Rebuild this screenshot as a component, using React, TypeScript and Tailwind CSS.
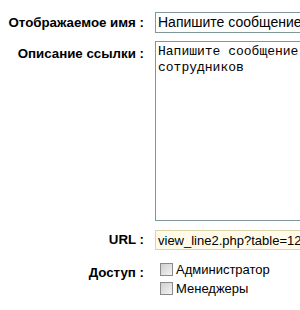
export default function App() {
  return (
    <div className="w-[300px] h-[310px] overflow-hidden bg-white text-black" style={{ fontFamily: '"Liberation Sans", Arial, sans-serif' }}>
      <div className="pt-[12px] w-[360px]">
        <div className="flex items-center">
          <div className="w-[146px] pr-[2px] text-right text-[13.3px] font-bold">Отображаемое имя :</div>
          <input
            readOnly
            value="Напишите сообщение для сотрудников"
            className="ml-[9px] h-[21px] w-[190px] border border-[#7f9898] px-[2px] text-[14px] outline-none"
          />
        </div>
        <div className="mt-[8px] flex items-start">
          <div className="w-[146px] pr-[2px] pt-[3px] text-right text-[13.3px] font-bold">Описание ссылки :</div>
          <textarea
            readOnly
            value="Напишите сообщение для сотрудников"
            className="ml-[9px] h-[180px] w-[200px] resize-none border border-[#7f9898] px-[2px] py-[2px] text-[13px] leading-[16px] outline-none"
            style={{ fontFamily: '"Liberation Mono", "Courier New", monospace' }}
          />
        </div>
        <div className="mt-[9px] flex items-center">
          <div className="w-[146px] pr-[2px] text-right text-[13.3px] font-bold">URL :</div>
          <input
            readOnly
            value="view_line2.php?table=12"
            className="ml-[9px] h-[20px] w-[190px] border border-[#ddd3a8] bg-[#fffbe8] px-[2px] text-[13px] outline-none"
          />
        </div>
        <div className="mt-[12px] flex items-start">
          <div className="w-[146px] pr-[2px] pt-[1px] text-right text-[13.3px] font-bold">Доступ :</div>
          <div className="ml-[14px] flex flex-col gap-[4px]">
            {["Администратор", "Менеджеры"].map((t) => (
              <label key={t} className="flex items-center gap-[2px] text-[13px] leading-[15px]">
                <span className="inline-block h-[13px] w-[13px] border border-[#8a8a8a] bg-gradient-to-br from-[#cfcfcf] to-[#f4f4f4]" />
                <span className="ml-[1px]">{t}</span>
              </label>
            ))}
          </div>
        </div>
      </div>
    </div>
  );
}
